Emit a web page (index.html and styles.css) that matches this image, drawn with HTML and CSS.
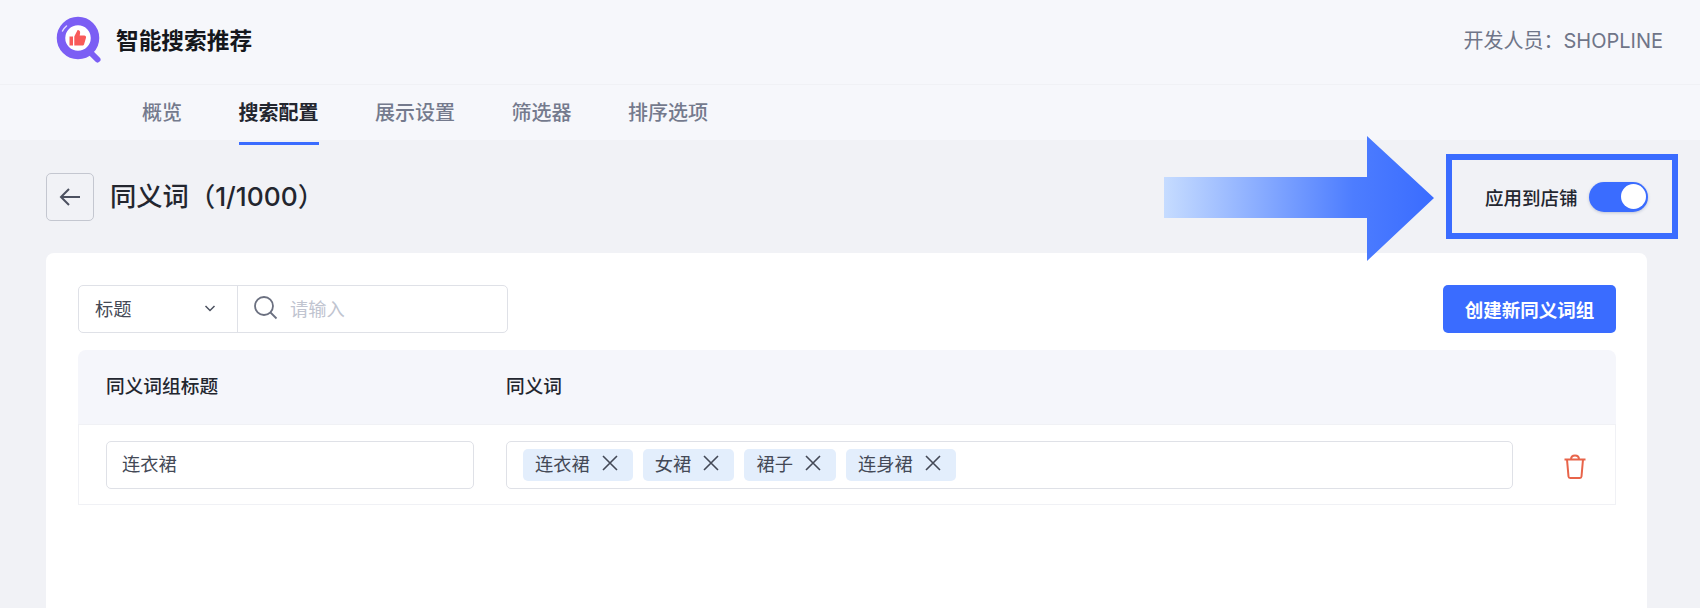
FILE: index.html
```html
<!DOCTYPE html>
<html lang="zh-CN">
<head>
  <meta charset="UTF-8">
  <title>智能搜索推荐</title>
  <link rel="stylesheet" href="styles.css">
</head>
<body>
  <header class="app-header">
    <div class="brand">
      <svg class="brand-logo" width="48" height="48" viewBox="0 0 48 48">
        <path d="M34 36l7.500 7.500" stroke="#7b5ef4" stroke-width="6" stroke-linecap="round"/>
        <circle cx="22" cy="22" r="17" fill="#fff" stroke="#7b5ef4" stroke-width="8.500"/>
        <path d="M6.500 15a17 17 0 0 1 4-5" fill="none" stroke="#e3dcff" stroke-width="1.500" stroke-linecap="round"/>
        <path d="M13.500 20.500h3.500v9h-3.500zM18.300 20.500l3.300-6.500c2 0 2.800 1.300 2.500 3.200l-.4 2.300h4.600c1.200 0 2 1 1.700 2.200l-1.900 6.500c-.2.800-.9 1.300-1.800 1.300h-8z" fill="#f85a5a"/>
      </svg>
      <span class="brand-name">智能搜索推荐</span>
    </div>
    <span class="developer">开发人员：SHOPLINE</span>
  </header>

  <nav class="tabs">
    <a class="tab">概览</a>
    <a class="tab active">搜索配置</a>
    <a class="tab">展示设置</a>
    <a class="tab">筛选器</a>
    <a class="tab">排序选项</a>
  </nav>

  <main class="content">
    <div class="title-row">
      <div class="title-left">
        <button class="back-btn">
          <svg width="24" height="24" viewBox="0 0 24 24" fill="none" stroke="#4c5160" stroke-width="2">
            <path d="M22 12H3M11 4l-8 8 8 8"/>
          </svg>
        </button>
        <h1>同义词（1/1000）</h1>
      </div>

      <svg class="arrow" width="272" height="126" viewBox="0 0 272 126">
        <defs>
          <linearGradient id="arrow-fill" x1="0" x2="1" y1="0" y2="0">
            <stop offset="0" stop-color="#c6dcff"/>
            <stop offset="0.7" stop-color="#4d7dff"/>
            <stop offset="1" stop-color="#3a6cff"/>
          </linearGradient>
        </defs>
        <path d="M0 41H203V0L270 62 203 125V82H0z" fill="url(#arrow-fill)"/>
      </svg>

      <div class="apply-box">
        <span>应用到店铺</span>
        <span class="switch"><span class="knob"></span></span>
      </div>
    </div>

    <section class="card">
      <div class="toolbar">
        <div class="filter">
          <div class="filter-select">
            <span>标题</span>
            <svg width="14" height="14" viewBox="0 0 14 14" fill="none" stroke="#4c5160" stroke-width="1.500">
              <path d="M2.500 5l4.500 4.500L11.500 5"/>
            </svg>
          </div>
          <div class="filter-search">
            <svg width="26" height="26" viewBox="0 0 26 26" fill="none" stroke="#6b7080" stroke-width="1.800">
              <circle cx="11" cy="11" r="9"/>
              <path d="M17.500 17.500l6 6"/>
            </svg>
            <span>请输入</span>
          </div>
        </div>
        <button class="primary-btn">创建新同义词组</button>
      </div>

      <div class="table">
        <div class="table-head">
          <div>同义词组标题</div>
          <div>同义词</div>
        </div>
        <div class="table-row">
          <div class="text-input">连衣裙</div>
          <div class="tag-input">
            <span class="tag">连衣裙<svg class="tag-x" viewBox="0 0 16 16"><path d="M1 1l14 14M15 1L1 15"/></svg></span>
            <span class="tag">女裙<svg class="tag-x" viewBox="0 0 16 16"><path d="M1 1l14 14M15 1L1 15"/></svg></span>
            <span class="tag">裙子<svg class="tag-x" viewBox="0 0 16 16"><path d="M1 1l14 14M15 1L1 15"/></svg></span>
            <span class="tag">连身裙<svg class="tag-x" viewBox="0 0 16 16"><path d="M1 1l14 14M15 1L1 15"/></svg></span>
          </div>
          <svg class="trash" width="24" height="26" viewBox="0 0 24 26" fill="none" stroke="#e8644a" stroke-width="2">
            <path d="M1.500 5.500h21M8 5.500C8 3 9.500 1.500 12 1.500S16 3 16 5.500M4 5.500l1.500 17c.1 1 .7 1.500 1.600 1.500h9.800c.9 0 1.500-.5 1.600-1.500l1.500-17"/>
          </svg>
        </div>
      </div>
    </section>
  </main>
</body>
</html>
```

FILE: styles.css
```css
* {
  box-sizing: border-box;
}

html, body {
  height: 100%;
}

body {
  margin: 0;
  display: flex;
  flex-direction: column;
  overflow: hidden;
  background-color: #f1f2f6;
  color: #23262f;
  font-family: Inter, "Noto Sans CJK SC", sans-serif;
}

.app-header {
  display: flex;
  justify-content: space-between;
  align-items: center;
  height: 85px;
  padding: 0 37px 5px 56px;
  background-color: #f6f7fb;
  border-bottom: 1px solid #f0f1f5;
}

.brand {
  display: flex;
  align-items: center;
  gap: 12px;
}

.brand-name {
  font-size: 22.700px;
  font-weight: 700;
  color: #15171c;
}

.developer {
  font-size: 20px;
  color: #6f7588;
}

.tabs {
  display: flex;
  gap: 56.500px;
  height: 55px;
  padding-left: 142px;
  background-color: #f6f7fb;
}

.tab {
  height: 60px;
  padding-top: 13px;
  font-size: 20px;
  font-weight: 500;
  line-height: 30px;
  color: #747a8d;
}

.tab.active {
  color: #23262f;
  font-weight: 700;
  border-bottom: 3px solid #3a6cff;
}

.content {
  flex: 1;
  display: flex;
  flex-direction: column;
  padding: 0 22px 0 46px;
}

.title-row {
  position: relative;
  display: flex;
  justify-content: space-between;
  align-items: center;
  margin: 14px 0;
}

.title-left {
  display: flex;
  align-items: center;
  gap: 16px;
}

.back-btn {
  display: flex;
  justify-content: center;
  align-items: center;
  width: 48px;
  height: 48px;
  padding: 0;
  background: none;
  border: 1px solid #c4c7d0;
  border-radius: 5px;
}

h1 {
  margin: 0;
  padding-bottom: 4px;
  font-size: 26.300px;
  font-weight: 500;
  color: #23262f;
}

.arrow {
  position: absolute;
  top: -18px;
  left: 1118px;
  z-index: 2;
}

.apply-box {
  display: flex;
  align-items: center;
  gap: 11px;
  width: 232px;
  height: 85px;
  padding-left: 33px;
  border: 6px solid #3a6cff;
  font-size: 18.500px;
  font-weight: 500;
}

.switch {
  display: flex;
  justify-content: flex-end;
  align-items: center;
  width: 59px;
  height: 30px;
  padding-right: 2px;
  background-color: #3a6cff;
  border-radius: 15px;
  box-shadow: 0 1px 3px rgba(40, 60, 120, 0.25);
}

.knob {
  width: 25px;
  height: 25px;
  background-color: #fff;
  border-radius: 50%;
}

.card {
  flex: 1;
  margin-right: 31px;
  padding: 32px 31px 32px 32px;
  background-color: #fff;
  border-radius: 8px 8px 0 0;
}

.toolbar {
  display: flex;
  justify-content: space-between;
  height: 48px;
}

.filter {
  display: flex;
  width: 430px;
  background-color: #fff;
  border: 1px solid #dfe1e7;
  border-radius: 5px;
  font-size: 18.300px;
}

.filter-select {
  display: flex;
  justify-content: space-between;
  align-items: center;
  width: 159px;
  padding: 0 20px 2px 16px;
  color: #444956;
  border-right: 1px solid #dfe1e7;
}

.filter-search {
  display: flex;
  align-items: center;
  gap: 11px;
  padding: 0 0 2px 15px;
  color: #c0c4d0;
}

.primary-btn {
  width: 173px;
  padding: 0;
  color: #fff;
  background-color: #3a6cff;
  border: none;
  border-radius: 5px;
  font-family: inherit;
  font-size: 18.500px;
  font-weight: 700;
}

.table {
  margin-top: 17px;
  border-radius: 8px 8px 0 0;
}

.table-head {
  display: grid;
  grid-template-columns: 368px 1fr;
  column-gap: 32px;
  align-items: center;
  height: 74px;
  padding-left: 28px;
  padding-bottom: 5px;
  background-color: #f5f6fb;
  border-radius: 8px 8px 0 0;
  font-size: 18.700px;
  font-weight: 500;
}

.table-row {
  display: grid;
  grid-template-columns: 368px 1007px 1fr;
  column-gap: 32px;
  align-items: center;
  height: 81px;
  padding-left: 27px;
  border: 1px solid #f0f1f5;
  font-size: 18.300px;
  color: #444956;
}

.text-input, .tag-input {
  display: flex;
  align-items: center;
  height: 48px;
  background-color: #fff;
  border: 1px solid #dfe1e7;
  border-radius: 5px;
}

.text-input {
  padding: 0 0 4px 15px;
}

.tag-input {
  gap: 10px;
  padding-left: 16px;
}

.tag {
  display: flex;
  align-items: center;
  gap: 12px;
  height: 32px;
  padding: 0 15px 3px 12px;
  background-color: #e3eefc;
  border-radius: 5px;
}

.tag-x {
  width: 16px;
  height: 16px;
  fill: none;
  stroke: #444956;
  stroke-width: 1.600;
}

.trash {
  margin: 5px 0 0 18px;
}
```
